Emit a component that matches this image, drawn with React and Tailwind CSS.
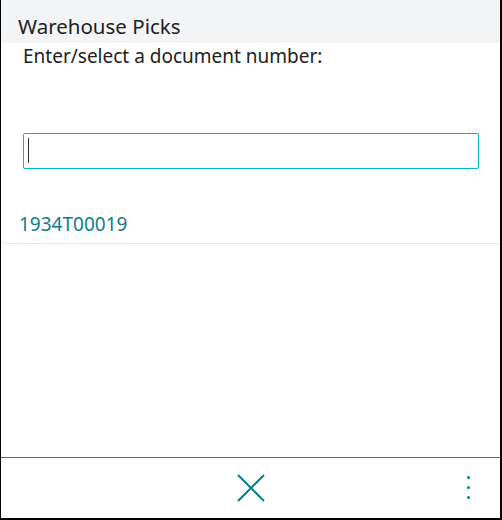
import { useState } from 'react';

export default function App() {
  const [value, setValue] = useState('');

  return (
    <div className="w-[502px] h-[520px] flex flex-col bg-white border-l border-r-2 border-b-2 border-black text-[#212121] font-['Noto_Sans',sans-serif]">
      <div className="h-[43px] shrink-0 bg-[#f3f4f6] pl-[17px] pt-[16px]">
        <div className="text-[20.5px] leading-none">Warehouse Picks</div>
      </div>
      <div className="flex-1 flex flex-col">
        <div className="pl-[22px] pt-[2px] text-[19px] leading-[22px]">Enter/select a document number:</div>
        <div className="pl-[22px] pr-[21px] mt-[66px]">
          <div className="relative">
            <input
              value={value}
              onChange={e => setValue(e.target.value)}
              className="w-full h-[36px] px-[5px] border border-[#00b7c3] rounded-[2px] outline-none text-[19px]"
            />
            {!value && (
              <span className="absolute left-[5px] top-[5px] w-px h-[25px] bg-[#333] pointer-events-none" />
            )}
          </div>
        </div>
        <div className="mt-[36px] h-[39px] pl-[18px] flex items-center border-b border-[#e8e8e8] text-[19px] text-[#0e7d8a]">
          1934T00019
        </div>
      </div>
      <div className="h-[61px] shrink-0 border-t border-[#666] flex items-center relative">
        <button className="mx-auto text-[#00838f]">
          <svg width="28" height="28" viewBox="0 0 28 28" fill="none" stroke="currentColor" strokeWidth="2">
            <path d="M1 1 27 27M27 1 1 27" />
          </svg>
        </button>
        <button className="absolute right-[30px] top-[18px] flex flex-col gap-[7px] text-[#00838f]">
          <span className="block w-[3px] h-[3px] rounded-full bg-current" />
          <span className="block w-[3px] h-[3px] rounded-full bg-current" />
          <span className="block w-[3px] h-[3px] rounded-full bg-current" />
        </button>
      </div>
    </div>
  );
}
